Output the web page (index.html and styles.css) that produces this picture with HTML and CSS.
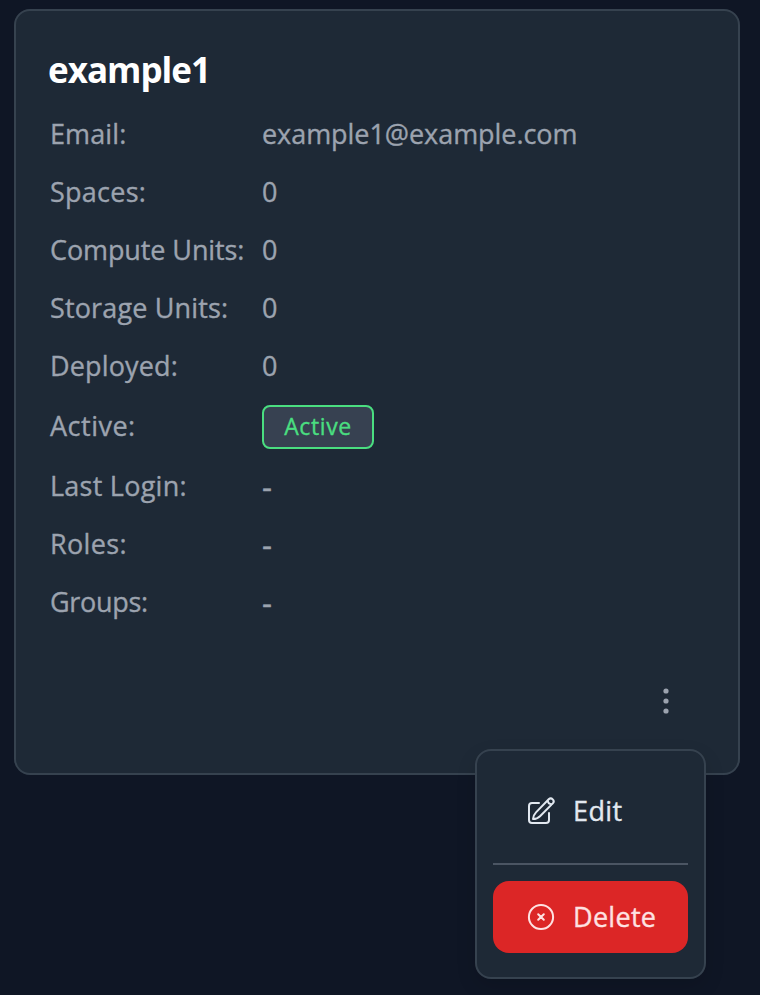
FILE: index.html
```html
<!DOCTYPE html>
<html lang="en">
<head>
<meta charset="utf-8">
<title>example1</title>
<link rel="stylesheet" href="styles.css">
</head>
<body>
<article class="card">
  <h1 class="title">example1</h1>
  <dl class="details">
    <dt><span class="l-email">Email:</span></dt><dd><span class="address">example1@example.com</span></dd>
    <dt><span class="l-spaces">Spaces:</span></dt><dd>0</dd>
    <dt><span class="l-compute">Compute Units:</span></dt><dd>0</dd>
    <dt><span class="l-storage">Storage Units:</span></dt><dd>0</dd>
    <dt><span class="l-deployed">Deployed:</span></dt><dd>0</dd>
    <dt class="tall"><span class="l-active">Active:</span></dt><dd class="tall status"><span class="badge">Active</span></dd>
    <dt><span class="l-login">Last Login:</span></dt><dd class="empty">-</dd>
    <dt><span class="l-roles">Roles:</span></dt><dd class="empty">-</dd>
    <dt><span class="l-groups">Groups:</span></dt><dd class="empty">-</dd>
  </dl>
  <div class="actions">
    <button class="more" aria-label="More actions">
      <svg width="8" height="28" viewBox="0 0 8 28" fill="currentColor"><circle cx="4" cy="4" r="2.6"/><circle cx="4" cy="14" r="2.6"/><circle cx="4" cy="24" r="2.6"/></svg>
    </button>
  </div>
  <div class="menu">
    <button class="item">
      <svg width="32" height="32" viewBox="0 0 32 32" fill="none" stroke="currentColor" stroke-width="2" stroke-linecap="round" stroke-linejoin="round"><path d="M14 8H7a3 3 0 0 0-3 3v14a3 3 0 0 0 3 3h14a3 3 0 0 0 3-3v-7"/><path d="M8 24c.3-2.500 1.200-4.800 3-6.600L23.700 4.300a2.900 2.900 0 0 1 4.100 4.100L15 21.200C13.200 23 10.500 24 8 24zM22.800 5.300c0 2.300 1.600 3.900 4 4"/></svg>
      <span class="edit-text">Edit</span>
    </button>
    <hr>
    <button class="item danger">
      <svg width="32" height="32" viewBox="0 0 32 32" fill="none" stroke="currentColor" stroke-width="2" stroke-linecap="round"><circle cx="16" cy="16" r="12.100"/><path d="M13.200 13.200l5.600 5.600M18.800 13.200l-5.600 5.600"/></svg>
      <span class="delete-text">Delete</span>
    </button>
  </div>
</article>
</body>
</html>
```
FILE: styles.css
```css
* { box-sizing: border-box; }
body {
  margin: 0;
  padding: 9px 20px 0 14px;
  height: 995px;
  overflow: hidden;
  background: #0f1625;
  color: #9ca3af;
  font: 27px/38px "Open Sans", "Noto Sans", sans-serif;
  -webkit-text-stroke: 0.35px currentColor;
}
.card {
  position: relative;
  height: 766px;
  padding: 34px 32px 0;
  background: #1e2936;
  border: 2px solid #36424f;
  border-radius: 16px;
}
.title {
  margin: 0;
  height: 61px;
  color: #fff;
  font-size: 35px;
  line-height: 50px;
  font-weight: 700;
  letter-spacing: -1px;
  -webkit-text-stroke: 0;
}
.details {
  display: grid;
  grid-template-columns: 212px 1fr;
  margin: 0;
  padding-left: 2px;
}
dt, dd {
  display: flex;
  align-items: center;
  height: 58px;
  margin: 0;
  padding-bottom: 2px;
  white-space: nowrap;
}
.address { letter-spacing: -0.05px; }
.l-email { letter-spacing: 0.1px; }
.l-spaces { letter-spacing: 0.25px; }
.l-compute { letter-spacing: -0.1px; }
.l-storage { letter-spacing: 0.15px; }
.l-deployed { letter-spacing: 0.15px; }
.l-active { letter-spacing: 0.5px; }
.l-login { letter-spacing: 0.25px; }
.l-roles { letter-spacing: 0.35px; }
.l-groups { letter-spacing: -0.3px; }
.empty { font-size: 31px; }
.tall { height: 62px; }
.status { padding-bottom: 0; }
.badge {
  width: 112px;
  height: 44px;
  border: 2px solid #4ade80;
  border-radius: 8px;
  background: #374151;
  color: #4ade80;
  font-size: 23px;
  line-height: 39px;
  text-align: center;
  letter-spacing: 0.6px;
}
.actions {
  display: flex;
  justify-content: flex-end;
  padding: 55px 36px 0 0;
}
button {
  border: 0;
  padding: 0;
  background: none;
  color: inherit;
  font: inherit;
}
.more { display: flex; }
.menu {
  position: absolute;
  left: 459px;
  top: 738px;
  width: 231px;
  height: 230px;
  padding: 24px 16px 0;
  background: #1e2936;
  border: 2px solid #36424f;
  border-radius: 16px;
  box-shadow: 0 8px 20px rgba(0, 0, 0, .12);
}
.item {
  display: flex;
  align-items: center;
  gap: 16px;
  width: 195px;
  height: 72px;
  padding-left: 32px;
  border-radius: 16px;
  color: #e2e8f0;
}
.item svg { flex: none; }
.edit-text { letter-spacing: 0.4px; padding-bottom: 1px; }
.delete-text { letter-spacing: 0.3px; padding-bottom: 1px; }
hr {
  height: 2px;
  margin: 16px 0 16px;
  border: 0;
  background: #4b5563;
}
.danger {
  background: #dc2626;
  color: #fee2e2;
}
```
